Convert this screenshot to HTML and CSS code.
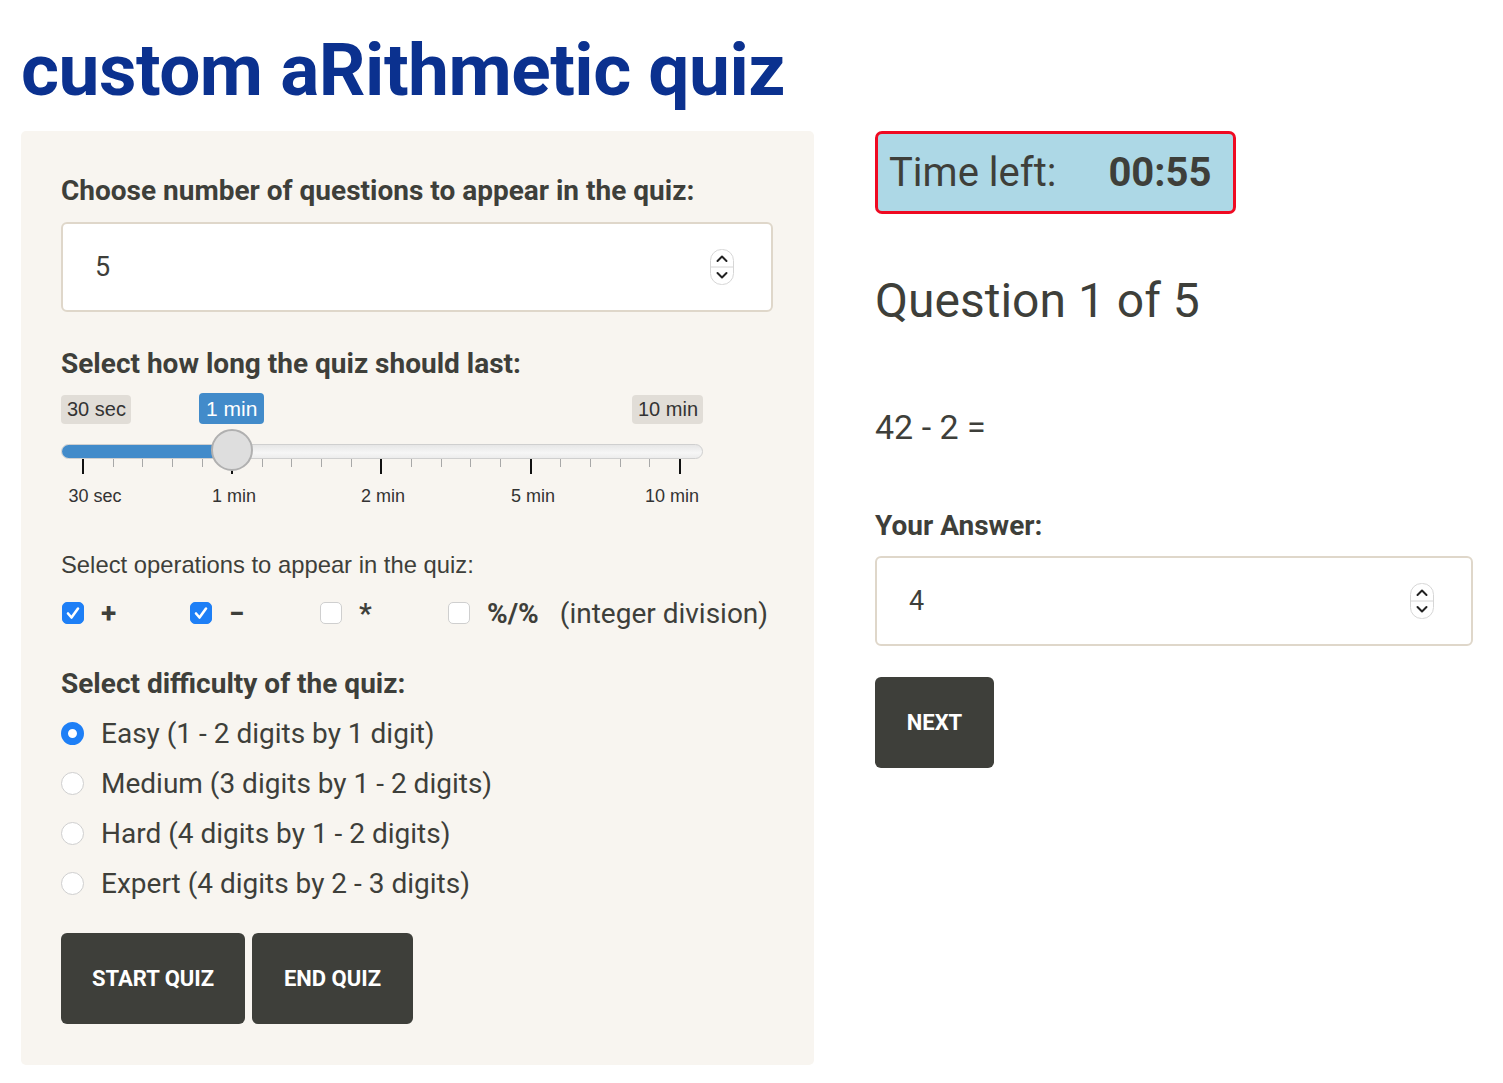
FILE: index.html
```html
<!DOCTYPE html>
<html>
<head>
<meta charset="utf-8">
<link rel="stylesheet" href="styles.css">
</head>
<body>
<div class="page">
  <h1 class="title">custom aRithmetic quiz</h1>
  <div class="row">
    <div class="well">
      <div class="label lbl-questions">Choose number of questions to appear in the quiz:</div>
      <div class="numinput">
        <span class="numval">5</span>
        <svg class="stepper" width="24" height="36" viewBox="0 0 24 36"><rect x="0.5" y="0.5" width="23" height="35" rx="11" fill="#fff" stroke="#d6d6d6"/><line x1="1" y1="18" x2="23" y2="18" stroke="#d6d6d6"/><path d="M7.5 12 L12 7.5 L16.5 12" fill="none" stroke="#222" stroke-width="2" stroke-linecap="round" stroke-linejoin="round"/><path d="M7.5 24 L12 28.5 L16.5 24" fill="none" stroke="#222" stroke-width="2" stroke-linecap="round" stroke-linejoin="round"/></svg>
      </div>

      <div class="label lbl-duration">Select how long the quiz should last:</div>
      <div class="slider">
        <div class="slider-top">
          <span class="irs-min">30 sec</span>
          <span class="irs-max">10 min</span>
        </div>
        <span class="irs-single">1 min</span>
        <div class="track"><div class="bar" style="width:171px"></div></div>
        <span class="handle"></span>
        <div class="ticks">
          <span class="tick major"></span><span class="tick"></span><span class="tick"></span><span class="tick"></span><span class="tick"></span>
          <span class="tick major"></span><span class="tick"></span><span class="tick"></span><span class="tick"></span><span class="tick"></span>
          <span class="tick major"></span><span class="tick"></span><span class="tick"></span><span class="tick"></span><span class="tick"></span>
          <span class="tick major"></span><span class="tick"></span><span class="tick"></span><span class="tick"></span><span class="tick"></span>
          <span class="tick major"></span>
        </div>
        <div class="tick-labels">
          <span class="tl" style="left:34px">30 sec</span>
          <span class="tl" style="left:173px">1 min</span>
          <span class="tl" style="left:322px">2 min</span>
          <span class="tl" style="left:472px">5 min</span>
          <span class="tl" style="left:611px">10 min</span>
        </div>
      </div>

      <div class="ops-label">Select operations to appear in the quiz:</div>
      <div class="ops">
        <div class="op"><span class="cb checked"><svg width="22" height="22" viewBox="0 0 22 22"><path d="M6 11.5 L9.5 15.5 L16 6.5" fill="none" stroke="#fff" stroke-width="2.6" stroke-linecap="round" stroke-linejoin="round"/></svg></span><span class="opsym">+</span></div>
        <div class="op op-w2"><span class="cb checked"><svg width="22" height="22" viewBox="0 0 22 22"><path d="M6 11.5 L9.5 15.5 L16 6.5" fill="none" stroke="#fff" stroke-width="2.6" stroke-linecap="round" stroke-linejoin="round"/></svg></span><span class="opsym">−</span></div>
        <div class="op"><span class="cb"></span><span class="opsym">*</span></div>
        <div class="op"><span class="cb"></span><span class="opsym">%/%</span><span class="opdesc">(integer division)</span></div>
      </div>

      <div class="label lbl-diff">Select difficulty of the quiz:</div>
      <div class="radios">
        <div class="radio"><span class="rb selected"></span><span>Easy (1 - 2 digits by 1 digit)</span></div>
        <div class="radio"><span class="rb"></span><span>Medium (3 digits by 1 - 2 digits)</span></div>
        <div class="radio"><span class="rb"></span><span>Hard (4 digits by 1 - 2 digits)</span></div>
        <div class="radio"><span class="rb"></span><span>Expert (4 digits by 2 - 3 digits)</span></div>
      </div>

      <div class="buttons">
        <button class="btn btn-start">START QUIZ</button>
        <button class="btn btn-end">END QUIZ</button>
      </div>
    </div>

    <div class="main">
      <div class="timer"><span class="timer-label">Time left:</span><span class="timer-val">00:55</span></div>
      <h2 class="question">Question 1 of 5</h2>
      <div class="problem">42 - 2 =</div>
      <div class="label lbl-answer">Your Answer:</div>
      <div class="numinput answer">
        <span class="numval">4</span>
        <svg class="stepper" width="24" height="36" viewBox="0 0 24 36"><rect x="0.5" y="0.5" width="23" height="35" rx="11" fill="#fff" stroke="#d6d6d6"/><line x1="1" y1="18" x2="23" y2="18" stroke="#d6d6d6"/><path d="M7.5 12 L12 7.5 L16.5 12" fill="none" stroke="#222" stroke-width="2" stroke-linecap="round" stroke-linejoin="round"/><path d="M7.5 24 L12 28.5 L16.5 24" fill="none" stroke="#222" stroke-width="2" stroke-linecap="round" stroke-linejoin="round"/></svg>
      </div>
      <button class="btn btn-next">NEXT</button>
    </div>
  </div>
</div>
</body>
</html>
```

FILE: styles.css
```css
html, body {
  margin: 0;
  padding: 0;
  background: #fff;
}
body {
  font-family: Roboto, "Liberation Sans", sans-serif;
  color: #3e3f3a;
}
.page {
  padding: 0 0 0 21px;
}
.title {
  margin: 0;
  padding-top: 30px;
  height: 131px;
  box-sizing: border-box;
  font-family: Roboto, sans-serif;
  font-weight: 700;
  font-size: 73px;
  line-height: 80px;
  color: #0b318f;
  letter-spacing: -0.5px;
}
.row {
  display: flex;
  gap: 61px;
  align-items: flex-start;
}
.well {
  width: 793px;
  box-sizing: border-box;
  background: #f8f5f0;
  border-radius: 5px;
  padding: 40px 40px 41px 40px;
}
.label {
  font-weight: 700;
  font-size: 28px;
  line-height: 40px;
  color: #3e3f3a;
}
.lbl-questions { margin-top: 0; }
.numinput {
  margin-top: 11px;
  height: 90px;
  box-sizing: border-box;
  background: #fff;
  border: 2px solid #dfd7ca;
  border-radius: 6px;
  display: flex;
  align-items: center;
  justify-content: space-between;
  padding: 0 37px 0 32px;
  width: 712px;
}
.numval {
  font-size: 27px;
}
.stepper { display: block; }
.lbl-duration { margin-top: 32px; }

/* slider */
.slider {
  position: relative;
  width: 642px;
  height: 130px;
  font-family: "Liberation Sans", Arial, sans-serif;
}
.slider-top {
  display: flex;
  justify-content: space-between;
  padding-top: 11px;
}
.irs-min, .irs-max {
  background: #e1ddd7;
  color: #333;
  font-size: 20px;
  line-height: 29px;
  padding: 0 5px 0 6px;
  border-radius: 4px;
}
.irs-single {
  position: absolute;
  left: 138px;
  top: 9px;
  background: #428bca;
  color: #fff;
  font-size: 21px;
  line-height: 31px;
  padding: 0 7px;
  border-radius: 4px;
}
.track {
  margin-top: 20px;
  height: 15px;
  box-sizing: border-box;
  border: 1px solid #cfcfcf;
  border-radius: 8px;
  background: linear-gradient(#e6e6e6, #f6f6f6 60%, #ececec);
  overflow: hidden;
}
.bar {
  height: 100%;
  background: #428bca;
}
.handle {
  position: absolute;
  left: 150px;
  top: 45px;
  width: 42px;
  height: 42px;
  box-sizing: border-box;
  border-radius: 50%;
  background: #dedede;
  border: 2px solid #b0b0b0;
  z-index: 2;
}
.ticks {
  display: flex;
  justify-content: space-between;
  width: 599px;
  margin-left: 21px;
  height: 16px;
}
.tick {
  width: 1px;
  height: 8px;
  background: #a8a8a8;
}
.tick.major {
  width: 2px;
  height: 15px;
  background: #111;
}
.tick-labels {
  position: relative;
  height: 40px;
  margin-top: 11px;
  font-size: 18px;
  color: #333;
}
.tl {
  position: absolute;
  top: 0;
  transform: translateX(-50%);
  white-space: nowrap;
}

.ops-label {
  margin-top: 35px;
  font-family: "Liberation Sans", Arial, sans-serif;
  font-size: 23.8px;
  line-height: 32px;
  color: #3e3f3a;
}
.ops {
  display: flex;
  align-items: center;
  margin-top: 15px;
  height: 34px;
}
.op {
  display: flex;
  align-items: center;
  width: 128px;
  font-size: 28px;
}
.op-w2 { width: 130px; }
.op:last-child { width: auto; }
.cb {
  width: 22px;
  height: 22px;
  box-sizing: border-box;
  border-radius: 5px;
  background: #fff;
  border: 1px solid #cfcfcf;
  display: inline-block;
  margin-left: 1px;
}
.cb svg { display: block; }
.cb.checked {
  background: #1e7ff6;
  border-color: #1e7ff6;
}
.cb.checked svg { margin: -1px; }
.opsym {
  margin-left: 17px;
  font-weight: 700;
}
.opdesc {
  margin-left: 21px;
}
.lbl-diff { margin-top: 34px; }
.radios {
  margin-top: 4px;
}
.radio {
  display: flex;
  align-items: center;
  height: 50px;
  font-size: 28px;
}
.rb {
  width: 23px;
  height: 23px;
  box-sizing: border-box;
  border-radius: 50%;
  border: 1px solid #cfcfcf;
  background: #fff;
  margin-right: 17px;
  flex-shrink: 0;
}
.rb.selected {
  border: 7px solid #1e7ff6;
  background: #fff;
}
.buttons {
  display: flex;
  gap: 7px;
  margin-top: 25px;
}
.btn {
  font-family: Roboto, sans-serif;
  background: #3e3f3a;
  color: #fff;
  border: none;
  border-radius: 6px;
  font-weight: 700;
  font-size: 22px;
  height: 91px;
  padding: 0;
}
.btn-start { width: 184px; }
.btn-end { width: 161px; }

/* main */
.main {
  width: 598px;
  display: flex;
  flex-direction: column;
  align-items: flex-start;
}
.timer {
  width: 361px;
  height: 83px;
  box-sizing: border-box;
  border: 3px solid #ef0a22;
  border-radius: 7px;
  background: #add8e6;
  display: flex;
  align-items: center;
  padding: 0 0 0 11px;
  font-size: 40px;
  color: #3e3f3a;
}
.timer-val {
  font-weight: 700;
  margin-left: 52px;
}
.question {
  margin: 0;
  margin-top: 58px;
  font-size: 48px;
  font-weight: 400;
  line-height: 58px;
}
.problem {
  margin-top: 77px;
  font-size: 34px;
  line-height: 40px;
}
.lbl-answer { margin-top: 59px; }
.numinput.answer {
  width: 598px;
  margin-top: 10px;
  padding: 0 37px 0 32px;
}
.btn-next {
  margin-top: 31px;
  width: 119px;
}
```
